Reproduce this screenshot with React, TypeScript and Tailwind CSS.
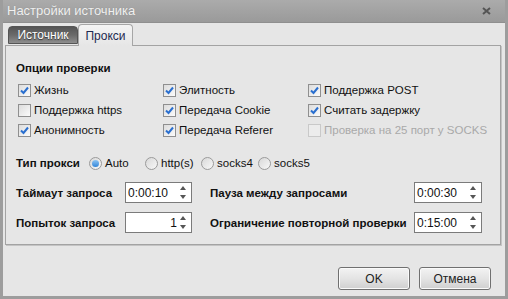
import type { ReactNode } from 'react';

const font = { fontFamily: '"Liberation Sans", Arial, sans-serif' };

function CheckBox({ checked, disabled, label }: { checked?: boolean; disabled?: boolean; label: string }) {
  return (
    <div className="flex h-[20px] items-center gap-[3px]">
      <span
        className={
          'flex h-[13px] w-[13px] shrink-0 items-center justify-center border ' +
          (disabled
            ? 'border-[#c9c9c9] bg-[#ececec]'
            : 'border-[#8f8f8f] bg-gradient-to-br from-[#dcdcdc] to-[#fbfbfb]')
        }
      >
        {checked && (
          <svg width="9" height="9" viewBox="0 0 9 9">
            <path d="M1 4.5 L3.5 7 L8 1.5" fill="none" stroke="#2a6fcf" strokeWidth="2" />
          </svg>
        )}
      </span>
      <span className={disabled ? 'text-[#a9a9a9]' : 'text-[#111]'}>{label}</span>
    </div>
  );
}

function Radio({ checked, label, w }: { checked?: boolean; label: string; w: string }) {
  return (
    <div className={'flex h-[20px] items-center gap-[3px] ' + w}>
      <span className="flex h-[13px] w-[13px] shrink-0 items-center justify-center rounded-full border border-[#9a9a9a] bg-gradient-to-br from-[#d8d8d8] to-[#f8f8f8]">
        {checked && (
          <span className="h-[7px] w-[7px] rounded-full bg-gradient-to-b from-[#8cc4f2] to-[#2f85d8]" />
        )}
      </span>
      <span className="text-[#111]">{label}</span>
    </div>
  );
}

function Spinner({ value, right, w }: { value: string; right?: boolean; w: string }) {
  return (
    <div className={'flex h-[21px] items-center border border-[#7b7b7b] bg-white pl-[2px] pr-[5px] ' + w}>
      <span className={'flex-1 text-[12px] text-[#111] ' + (right ? 'pr-[3px] text-right' : '')}>{value}</span>
      <span className="flex flex-col gap-[5px]">
        <svg width="6" height="4" viewBox="0 0 6 4">
          <path d="M0 4 L3 0 L6 4 Z" fill="#555" />
        </svg>
        <svg width="6" height="4" viewBox="0 0 6 4">
          <path d="M0 0 L6 0 L3 4 Z" fill="#555" />
        </svg>
      </span>
    </div>
  );
}

function Btn({ children }: { children: ReactNode }) {
  return (
    <button className="flex h-[23px] w-[72px] items-center justify-center rounded-[3px] border border-[#707070] bg-gradient-to-b from-[#f3f3f3] via-[#e4e4e4] to-[#cfcfcf] text-[12px] text-[#222] shadow-[inset_0_0_0_1px_#fafafa]">
      {children}
    </button>
  );
}

export default function App() {
  return (
    <div
      className="flex h-[299px] w-[508px] flex-col whitespace-nowrap bg-[#9d9d9d] px-[3px] pb-[3px] text-[11.5px] leading-[14px]"
      style={font}
    >
      <div className="flex h-[22px] items-center justify-between bg-gradient-to-b from-[#ababab] to-[#9a9a9a] pl-[4px] pr-[14px]">
        <span className="text-[13px] text-[#f0f0f0] [text-shadow:0_0_1px_#888]">Настройки источника</span>
        <svg width="9" height="8" viewBox="0 0 9 8">
          <path d="M1 1 L8 7 M8 1 L1 7" stroke="#555" strokeWidth="2" />
        </svg>
      </div>

      <div className="flex flex-1 flex-col border-t border-[#8f8f8f] bg-[#e6e6e6] pl-[2px] pr-[4px]">
        <div className="flex h-[22px] items-end pl-[3px] pt-[1px] text-[12px]">
          <div className="mb-[1px] flex h-[18px] w-[70px] items-center justify-center rounded-t-[4px] border border-[#555] bg-gradient-to-b from-[#555] via-[#6a6a6a] to-[#8e8e8e] text-white [text-shadow:0_1px_1px_#333]">
            Источник
          </div>
          <div className="relative top-[1px] z-10 flex h-[22px] w-[55px] items-center justify-center rounded-t-[4px] border border-b-0 border-[#a6a6a6] bg-gradient-to-b from-[#f4f4f4] to-[#e6e6e6] text-[#1e2850]">
            Прокси
          </div>
        </div>

        <div className="flex h-[200px] flex-col border border-[#a3a3a3] pl-[10px] pt-[14px] shadow-[1px_1px_0_#c4c4c4]">
          <div className="h-[16px] font-bold leading-[16px] text-[#111]">Опции проверки</div>

          <div className="mt-[4px] grid grid-cols-[145px_145px_1fr] pl-[2px]">
            <CheckBox checked label="Жизнь" />
            <CheckBox checked label="Элитность" />
            <CheckBox checked label="Поддержка POST" />
            <CheckBox label="Поддержка https" />
            <CheckBox checked label="Передача Cookie" />
            <CheckBox checked label="Считать задержку" />
            <CheckBox checked label="Анонимность" />
            <CheckBox checked label="Передача Referer" />
            <CheckBox disabled label="Проверка на 25 порт у SOCKS" />
          </div>

          <div className="mt-[13px] flex h-[20px] items-center">
            <span className="w-[73px] font-bold text-[#111]">Тип прокси</span>
            <Radio checked label="Auto" w="w-[56px]" />
            <Radio label="http(s)" w="w-[56px]" />
            <Radio label="socks4" w="w-[57px]" />
            <Radio label="socks5" w="w-[60px]" />
          </div>

          <div className="mt-[9px] flex items-center">
            <span className="w-[109px] font-bold text-[#111]">Таймаут запроса</span>
            <Spinner value="0:00:10" w="w-[67px]" />
            <span className="ml-[18px] w-[204px] font-bold text-[#111]">Пауза между запросами</span>
            <Spinner value="0:00:30" w="w-[68px]" />
          </div>

          <div className="mt-[9px] flex items-center">
            <span className="w-[109px] font-bold text-[#111]">Попыток запроса</span>
            <Spinner value="1" right w="w-[67px]" />
            <span className="ml-[18px] w-[204px] font-bold text-[#111]">Ограничение повторной проверки</span>
            <Spinner value="0:15:00" w="w-[68px]" />
          </div>
        </div>

        <div className="mt-[22px] flex justify-end gap-[9px] pr-[10px]">
          <Btn>OK</Btn>
          <Btn>Отмена</Btn>
        </div>
      </div>
    </div>
  );
}
